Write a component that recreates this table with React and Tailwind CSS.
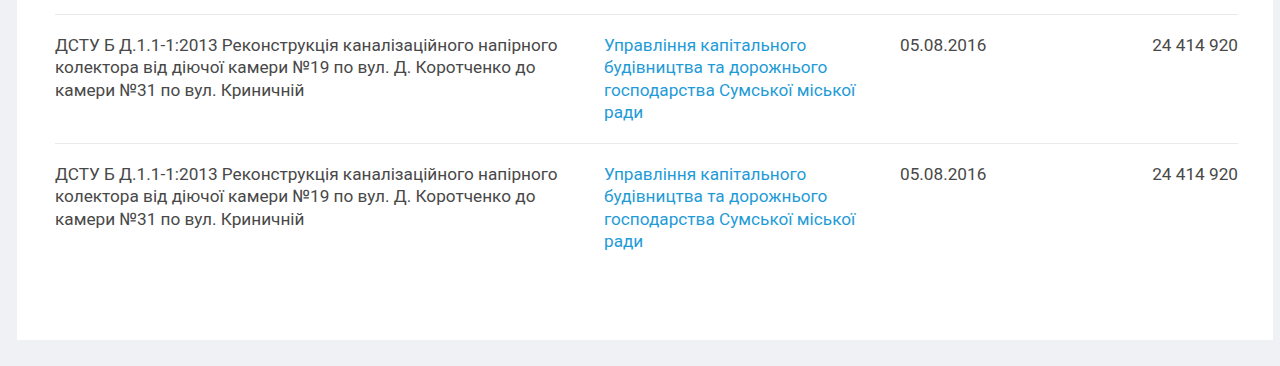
import React from 'react';

const rows = [
  {
    title:
      'ДСТУ Б Д.1.1-1:2013 Реконструкція каналізаційного напірного колектора від діючої камери №19 по вул. Д. Коротченко до камери №31 по вул. Криничній',
    customer: 'Управління капітального будівництва та дорожнього господарства Сумської міської ради',
    date: '05.08.2016',
    amount: '24 414 920',
  },
  {
    title:
      'ДСТУ Б Д.1.1-1:2013 Реконструкція каналізаційного напірного колектора від діючої камери №19 по вул. Д. Коротченко до камери №31 по вул. Криничній',
    customer: 'Управління капітального будівництва та дорожнього господарства Сумської міської ради',
    date: '05.08.2016',
    amount: '24 414 920',
  },
];

const App = () => {
  return (
    <div className="w-[1280px] h-[366px] bg-[#f0f1f4] overflow-hidden font-['Roboto',sans-serif]">
      <div className="ml-[17px] w-[1256px] h-[340px] bg-white pt-[14px] pl-[38px] pr-[35px]">
        {rows.map((row, i) => (
          <div
            key={i}
            className="grid grid-cols-[549px_296px_1fr_auto] border-t border-[#e9eaec] pt-[19px] pb-[20px] text-[17.2px] leading-[22.3px]"
          >
            <div className="w-[522px] text-[#484848]">{row.title}</div>
            <a href="#" className="w-[275px] text-[#1f9bd7]">
              {row.customer}
            </a>
            <div className="text-[#484848]">{row.date}</div>
            <div className="text-right text-[#484848]">{row.amount}</div>
          </div>
        ))}
      </div>
    </div>
  );
};

export default App;
